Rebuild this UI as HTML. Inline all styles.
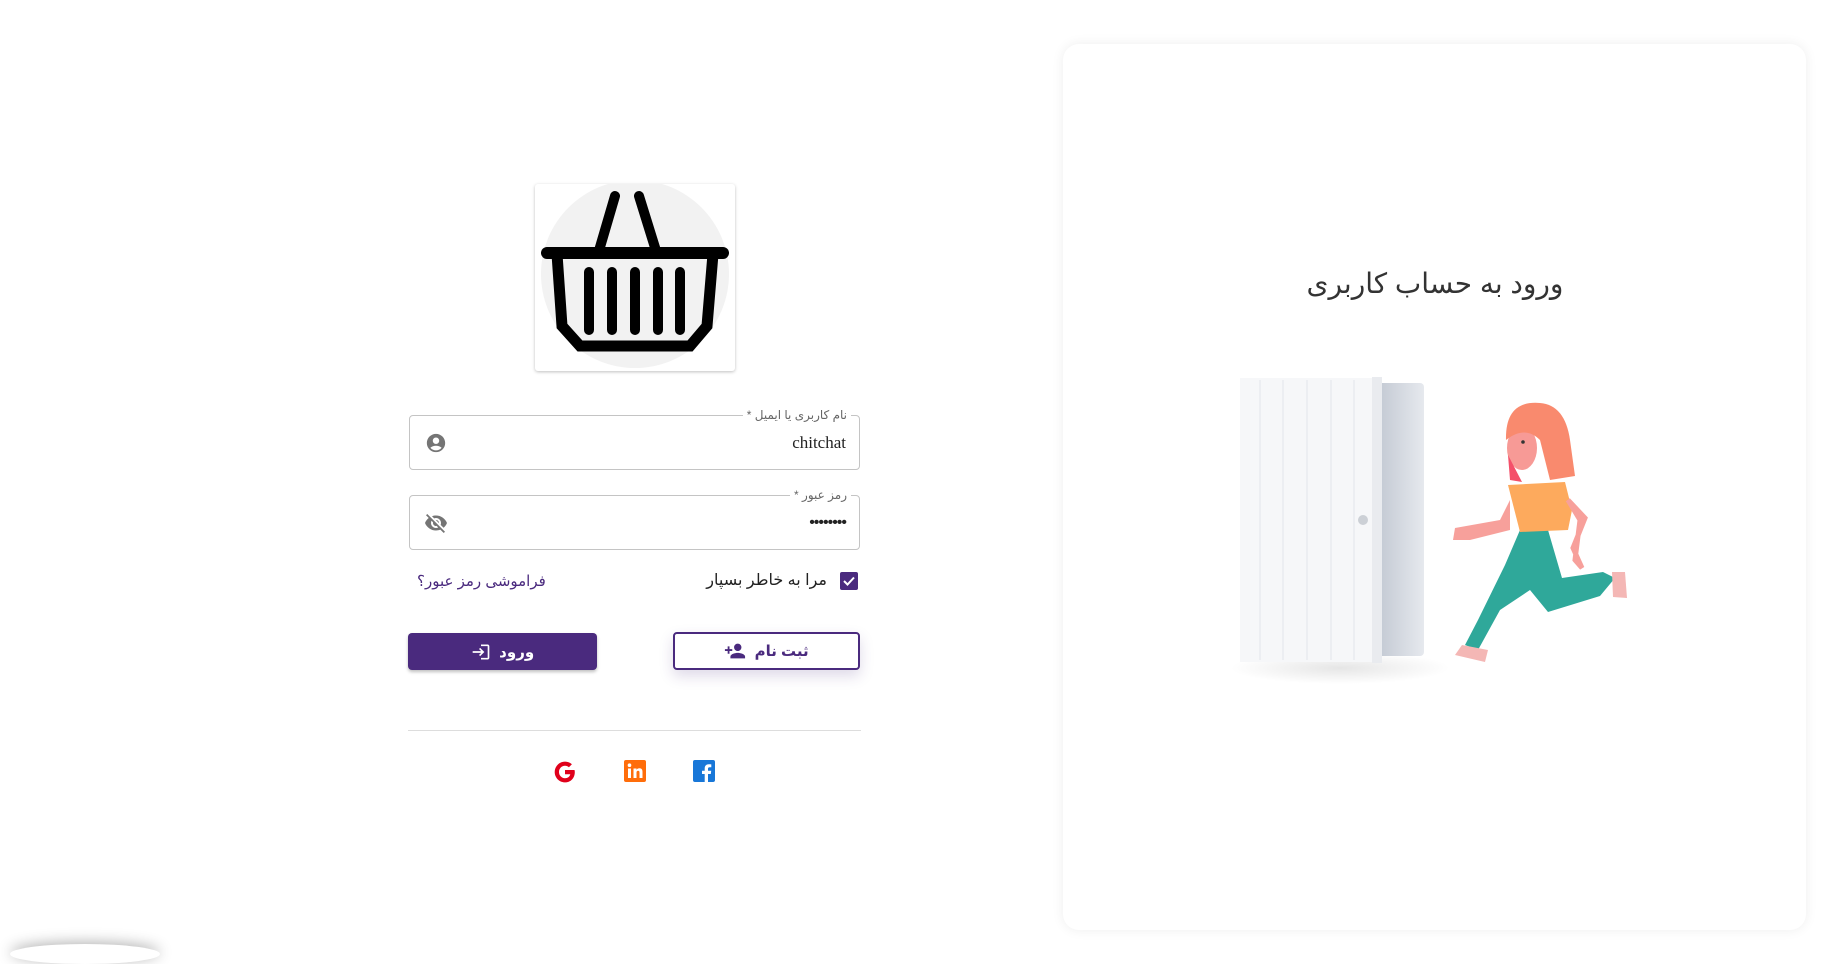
<!DOCTYPE html>
<html><head><meta charset="utf-8"><style>
*{box-sizing:border-box;margin:0;padding:0}
body{width:1836px;height:939px;background:#fff;font-family:"Liberation Sans","DejaVu Sans",sans-serif;position:relative;overflow:hidden}
.abs{position:absolute}
.card{left:1063px;top:44px;width:743px;height:886px;border-radius:16px;background:#fff;box-shadow:0 0 12px rgba(0,0,0,.07)}
.title{left:1062px;width:746px;top:267px;text-align:center;font-size:28px;color:#333;direction:rtl}
.logo{left:535px;top:184px;width:200px;height:187px;background:#fff;box-shadow:0 1px 3px rgba(0,0,0,.25);border-radius:3px;overflow:hidden}
.inp{left:409px;width:451px;height:55px;border:1px solid #c4c4c4;border-radius:4px}
.lab{font-size:12px;color:#666;background:#fff;padding:0 4px;direction:rtl;top:-9px;right:8px;position:absolute;line-height:16px}
.btn{height:37px;border-radius:4px;display:flex;align-items:center;justify-content:center;font-size:15px;font-weight:bold;direction:rtl}
</style></head><body>
<div class="abs" style="left:10px;top:944px;width:150px;height:20px;box-shadow:0 -2px 14px rgba(0,0,0,.3);border-radius:50%"></div>
<div class="abs card"></div>
<div class="abs title">ورود به حساب کاربری</div>
<svg class="abs" style="left:1225px;top:370px" width="430" height="320" viewBox="1225 370 430 320">
<defs><radialGradient id="sh" cx=".5" cy=".5" r=".5"><stop offset="0" stop-color="#000" stop-opacity=".1"/><stop offset="1" stop-color="#000" stop-opacity="0"/></radialGradient>
<linearGradient id="sd" x1="0" x2="1"><stop offset="0" stop-color="#c3c9d3"/><stop offset="1" stop-color="#e6e9ee"/></linearGradient></defs>
<ellipse cx="1340" cy="668" rx="110" ry="16" fill="url(#sh)"/>
<rect x="1378" y="383" width="46" height="273" rx="4" fill="url(#sd)"/>
<rect x="1240" y="378" width="140" height="284" fill="#f6f7f9"/>
<rect x="1372" y="377" width="10" height="286" fill="#e9ebef"/>
<g stroke="#e3e5ea" stroke-width="1"><line x1="1260" y1="380" x2="1260" y2="660"/><line x1="1283" y1="380" x2="1283" y2="660"/><line x1="1307" y1="380" x2="1307" y2="660"/><line x1="1331" y1="380" x2="1331" y2="660"/><line x1="1354" y1="380" x2="1354" y2="660"/></g>
<circle cx="1363" cy="520" r="5" fill="#ccd0d6"/>
<path d="M1505 565 L1478 620 L1465 645 L1478 650 L1500 610 L1530 590 L1548 612 L1600 596 L1615 578 L1603 572 L1562 578 L1548 530 L1520 530 Z" fill="#2fa89a"/>
<path d="M1462 645 L1455 655 L1485 662 L1488 650 Z" fill="#f4b7b5"/>
<path d="M1612 572 L1625 572 L1627 598 L1613 597 Z" fill="#f4b7b5"/>
<path d="M1508 485 L1565 482 L1572 510 L1568 530 L1520 532 Z" fill="#fdaa5d"/>
<path d="M1510 500 L1500 520 L1455 528 L1453 540 L1470 540 L1510 530 Z" fill="#f7a09b"/>
<path d="M1568 500 L1580 520 L1575 560 L1582 568 L1573 548 L1585 518 Z" fill="#f7a09b" stroke="#f7a09b" stroke-width="5"/>
<ellipse cx="1522" cy="448" rx="15" ry="22" fill="#f79a96"/>
<path d="M1506 440 Q1505 400 1540 403 Q1565 405 1570 440 L1575 476 L1550 480 L1540 440 Q1525 425 1506 440 Z" fill="#f98a6e"/>
<path d="M1508 455 L1510 480 L1522 482 Z" fill="#f4506a"/>
<circle cx="1523" cy="442" r="1.8" fill="#333"/>
</svg>
<div class="abs logo">
<svg width="200" height="187" viewBox="0 0 200 187">
<circle cx="100" cy="90" r="94" fill="#f2f2f2"/>
<g stroke="#000" stroke-linecap="round" fill="none">
<path d="M80 12 L63 70 M104 12 L122 70" stroke-width="10"/>
<path d="M12 69 L188 69" stroke-width="12"/>
<path d="M22 70 L27 142 L45 162 L155 162 L172 142 L178 70" stroke-width="11" stroke-linecap="butt"/>
<path d="M54 88 V146 M77 88 V146 M100 88 V146 M123 88 V146 M145 88 V146" stroke-width="10"/>
</g>
</svg></div>
<div class="abs inp" style="top:415px"><span class="lab">نام کاربری یا ایمیل *</span>
<svg class="abs" style="left:15px;top:16px" width="22" height="22" viewBox="0 0 24 24"><path fill="#757575" d="M12 2C6.48 2 2 6.48 2 12s4.48 10 10 10 10-4.48 10-10S17.52 2 12 2zm0 4c1.930 0 3.5 1.57 3.5 3.5S13.93 13 12 13s-3.5-1.57-3.5-3.5S10.07 6 12 6zm0 14c-2.03 0-4.43-.82-6.14-2.880C7.55 15.8 9.68 15 12 15s4.45.8 6.14 2.12C16.43 19.18 14.03 20 12 20z"/></svg>
<div class="abs" style="right:13px;top:17px;font-family:'Liberation Serif',serif;font-size:17px;color:#222">chitchat</div></div>
<div class="abs inp" style="top:495px"><span class="lab">رمز عبور *</span>
<svg class="abs" style="left:14px;top:15px" width="24" height="24" viewBox="0 0 24 24"><path fill="#757575" d="M12 7c2.76 0 5 2.24 5 5 0 .65-.13 1.26-.36 1.830l2.92 2.92c1.51-1.26 2.7-2.89 3.43-4.75-1.73-4.39-6-7.5-11-7.5-1.4 0-2.74.25-3.98.7l2.16 2.16C10.74 7.13 11.35 7 12 7zM2 4.27l2.28 2.28.46.46C3.08 8.3 1.78 10.02 1 12c1.73 4.39 6 7.5 11 7.5 1.55 0 3.03-.3 4.38-.84l.42.42L19.73 22 21 20.73 3.27 3 2 4.27zM7.53 9.8l1.55 1.55c-.05.21-.08.43-.08.65 0 1.66 1.34 3 3 3 .22 0 .44-.03.65-.08l1.55 1.55c-.67.33-1.41.53-2.2.53-2.76 0-5-2.24-5-5 0-.79.2-1.53.53-2.2zm4.31-.78l3.15 3.15.02-.16c0-1.66-1.34-3-3-3l-.17.01z"/></svg>
<div class="abs" style="right:13px;top:18px;font-size:16px;color:#222;letter-spacing:-1px">••••••••</div></div>
<div class="abs" style="left:840px;top:572px;width:18px;height:18px;background:#4a2a7e;border-radius:2px"><svg width="18" height="18" viewBox="0 0 18 18"><path d="M4 9 L7.5 12.5 L14 5.5" stroke="#fff" stroke-width="2" fill="none"/></svg></div>
<div class="abs" style="right:1009px;top:570px;font-size:16px;color:#222;direction:rtl">مرا به خاطر بسپار</div>
<div class="abs" style="left:417px;top:572px;font-size:15px;color:#4a2a7e;direction:rtl">فراموشی رمز عبور؟</div>
<div class="abs btn" style="left:408px;top:633px;width:189px;background:#4a2a7e;color:#fff;box-shadow:0 2px 3px rgba(0,0,0,.25)">ورود&nbsp;&nbsp;<svg width="20" height="20" viewBox="0 0 24 24"><path fill="#fff" d="M11 7 9.6 8.4l2.6 2.6H2v2h10.2l-2.6 2.6L11 17l5-5-5-5zm9 12h-8v2h8c1.1 0 2-.9 2-2V5c0-1.1-.9-2-2-2h-8v2h8v14z"/></svg></div>
<div class="abs btn" style="left:673px;top:632px;width:187px;height:38px;border:2px solid #4a2a7e;color:#4a2a7e;background:#fff;box-shadow:0 6px 14px rgba(74,42,126,.18)">ثبت نام&nbsp;&nbsp;<svg width="22" height="22" viewBox="0 0 24 24"><path fill="#4a2a7e" d="M15 12c2.21 0 4-1.79 4-4s-1.79-4-4-4-4 1.79-4 4 1.79 4 4 4zm-9-2V7H4v3H1v2h3v3h2v-3h3v-2H6zm9 4c-2.67 0-8 1.34-8 4v2h16v-2c0-2.66-5.33-4-8-4z"/></svg></div>
<div class="abs" style="left:408px;top:730px;width:453px;height:1px;background:#ddd"></div>
<svg class="abs" style="left:553px;top:760px" width="24" height="24" viewBox="0 0 24 24"><path d="M21.5 10H12v4.2h5.3c-.6 2.6-2.8 4-5.3 4-3.3 0-6-2.7-6-6.2s2.7-6.2 6-6.2c1.5 0 2.9.6 3.9 1.5l3-3C17 2.6 14.7 1.6 12 1.6 6.3 1.6 1.7 6.3 1.7 12S6.3 22.4 12 22.4c5.4 0 9.8-3.9 9.8-10.4 0-.7-.1-1.3-.3-2z" fill="#e0001b"/></svg>
<svg class="abs" style="left:624px;top:760px" width="22" height="22" viewBox="0 0 22 22"><rect width="22" height="22" rx="2" fill="#ff6d0a"/><rect x="4" y="8.5" width="3" height="9.5" fill="#fff"/><circle cx="5.5" cy="5.2" r="1.8" fill="#fff"/><path d="M9.5 8.5h3v1.4c.6-1 1.7-1.6 3-1.6 2.2 0 3 1.4 3 3.7V18h-3v-5.4c0-1.2-.4-1.8-1.4-1.8s-1.6.7-1.6 1.8V18h-3z" fill="#fff"/></svg>
<svg class="abs" style="left:693px;top:760px" width="22" height="22" viewBox="0 0 22 22"><rect width="22" height="22" rx="2" fill="#1877d8"/><path d="M15 22v-8h2.8l.4-3.2H15V8.8c0-.9.3-1.6 1.6-1.6h1.7V4.4c-.3 0-1.3-.1-2.5-.1-2.5 0-4.1 1.5-4.1 4.2v2.3H9V14h2.7v8z" fill="#fff"/></svg>
</body></html>
